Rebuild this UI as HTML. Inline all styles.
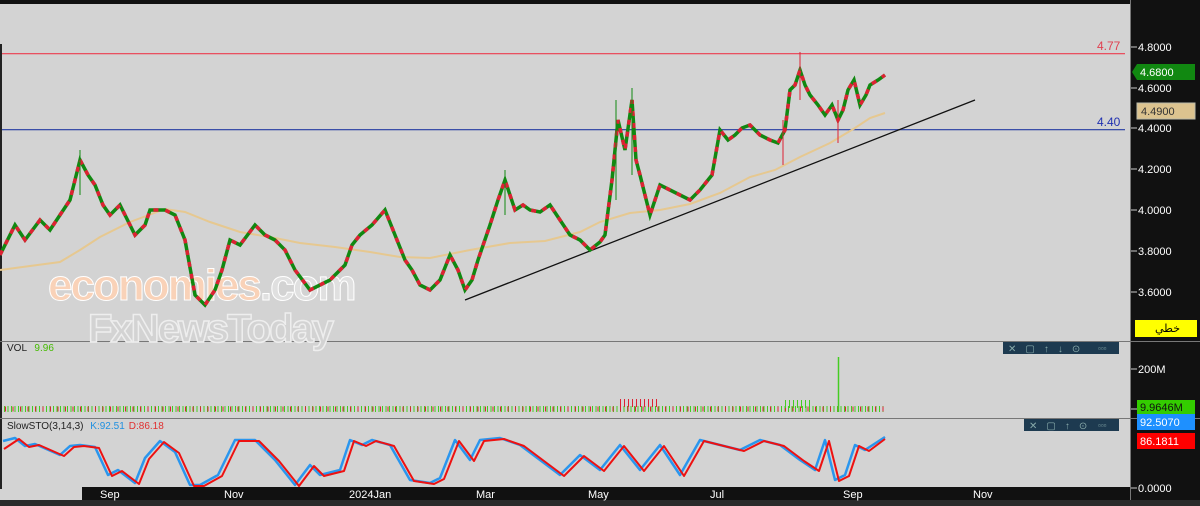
<!DOCTYPE html>
<html><head><meta charset="utf-8"><style>
body{margin:0;width:1200px;height:506px;overflow:hidden;background:#d3d3d3;font-family:"Liberation Sans",sans-serif}
svg{display:block}
</style></head><body>
<svg width="1200" height="506" xmlns="http://www.w3.org/2000/svg" font-family="Liberation Sans, DejaVu Sans, sans-serif">
<rect width="1200" height="506" fill="#d3d3d3"/>
<rect x="0" y="0" width="1130" height="4" fill="#111"/>
<rect x="0" y="44" width="2" height="445" fill="#222"/>
<rect x="1130" y="0" width="70" height="506" fill="#111"/>
<line x1="1130.5" y1="0" x2="1130.5" y2="500" stroke="#777"/>
<line x1="0" y1="341.5" x2="1200" y2="341.5" stroke="#777"/>
<line x1="0" y1="418.5" x2="1200" y2="418.5" stroke="#777"/>
<rect x="2" y="53" width="1123" height="1.3" fill="#e85060"/>
<rect x="2" y="129" width="1123" height="1.3" fill="#3a4ea8"/>
<text x="1097" y="50" font-size="12" fill="#e04050">4.77</text>
<text x="1097" y="126" font-size="12" fill="#2030b0">4.40</text>
<text x="48" y="300" font-size="44" font-weight="bold" fill="#f9d2b8" stroke="#fff" stroke-width="1" letter-spacing="-2">economies<tspan fill="#e0e0e0">.com</tspan></text>
<text x="88" y="342" font-size="40" font-weight="bold" fill="#d3d3d3" stroke="#eee" stroke-width="1.5" letter-spacing="-2">FxNewsToday</text>
<polyline fill="none" stroke="#e6c890" stroke-width="2" points="0,270 30,266 60,262 80,250 100,237 130,222 165,209 185,212 210,222 240,232 275,238 300,243 335,247 370,252 400,257 430,258 470,250 510,243 545,241 580,232 600,222 630,213 660,210 690,204 720,193 750,177 775,170 800,157 830,143 855,128 870,118 885,113"/>
<line x1="465" y1="300" x2="975" y2="100" stroke="#111" stroke-width="1.3"/>
<g fill="none" stroke-width="3.5">
<polyline stroke="#118811" points="0,255 15,225 25,240 40,220 50,230 60,215 70,200 80,160 88,175 95,185 103,205 110,215 120,205 135,235 145,225 150,210 165,210 175,215 185,240 195,295 205,305 215,290 222,270 230,240 240,245 255,225 265,235 275,240 285,250 295,270 310,290 320,285 330,280 345,265 352,245 360,235 372,225 385,210 395,235 405,260 412,270 420,285 430,290 440,280 450,255 458,270 465,290 472,280 478,260 490,225 498,200 505,180 515,210 523,205 530,210 540,212 550,205 560,220 570,235 580,240 590,250 600,242 605,235 612,180 618,120 625,150 632,100 636,160 640,175 650,215 660,185 670,190 680,195 690,200 700,190 712,175 720,130 728,140 735,135 742,128 750,125 760,135 770,140 778,143 785,130 790,90 795,85 800,70 805,85 810,95 818,105 825,115 832,105 838,120 843,110 848,90 854,80 860,105 866,95 870,85 878,80 885,75"/>
<polyline stroke="#dd2233" stroke-dasharray="5 7" points="0,255 15,225 25,240 40,220 50,230 60,215 70,200 80,160 88,175 95,185 103,205 110,215 120,205 135,235 145,225 150,210 165,210 175,215 185,240 195,295 205,305 215,290 222,270 230,240 240,245 255,225 265,235 275,240 285,250 295,270 310,290 320,285 330,280 345,265 352,245 360,235 372,225 385,210 395,235 405,260 412,270 420,285 430,290 440,280 450,255 458,270 465,290 472,280 478,260 490,225 498,200 505,180 515,210 523,205 530,210 540,212 550,205 560,220 570,235 580,240 590,250 600,242 605,235 612,180 618,120 625,150 632,100 636,160 640,175 650,215 660,185 670,190 680,195 690,200 700,190 712,175 720,130 728,140 735,135 742,128 750,125 760,135 770,140 778,143 785,130 790,90 795,85 800,70 805,85 810,95 818,105 825,115 832,105 838,120 843,110 848,90 854,80 860,105 866,95 870,85 878,80 885,75"/>
</g>
<g stroke-width="1">
<line x1="632" y1="88" x2="632" y2="175" stroke="#118811"/>
<line x1="616" y1="100" x2="616" y2="200" stroke="#118811"/>
<line x1="80" y1="150" x2="80" y2="195" stroke="#118811"/>
<line x1="505" y1="170" x2="505" y2="215" stroke="#118811"/>
<line x1="800" y1="52" x2="800" y2="100" stroke="#dd2233"/>
<line x1="838" y1="100" x2="838" y2="143" stroke="#dd2233"/>
<line x1="783" y1="120" x2="783" y2="165" stroke="#dd2233"/>
</g>
<line x1="4" y1="409" x2="885" y2="409" stroke="#44cc22" stroke-width="6" stroke-dasharray="1 2.5"/>
<line x1="5" y1="409" x2="885" y2="409" stroke="#dd2233" stroke-width="5" stroke-dasharray="1 6.5"/>
<line x1="620" y1="403" x2="660" y2="403" stroke="#dd2233" stroke-width="8" stroke-dasharray="1 3"/>
<line x1="785" y1="404" x2="810" y2="404" stroke="#44cc22" stroke-width="8" stroke-dasharray="1 3"/>
<line x1="838.5" y1="357" x2="838.5" y2="412" stroke="#44cc22" stroke-width="1.5"/>
<text x="7" y="351" font-size="10" fill="#222">VOL <tspan dx="5" fill="#44bb00">9.96</tspan></text>
<text x="7" y="429" font-size="10" fill="#222">SlowSTO(3,14,3) <tspan dx="4" fill="#2090e0">K:92.51</tspan><tspan dx="4" fill="#e03030">D:86.18</tspan></text>
<polyline fill="none" stroke="#2a96ee" stroke-width="2.5" stroke-linejoin="round" points="3,441 15,438 25,446 35,444 60,455 70,446 80,445 95,447 108,475 118,470 135,483 145,458 160,441 175,452 190,485 200,485 218,475 235,440 255,440 275,460 295,485 310,465 320,475 340,470 350,440 362,445 372,440 390,445 410,480 430,483 440,478 455,440 470,460 480,440 500,438 520,445 540,460 560,475 580,455 600,470 620,445 640,470 660,445 680,475 700,440 720,445 740,450 760,440 780,445 800,460 815,470 825,440 835,480 845,475 855,445 865,450 885,437"/>
<polyline fill="none" stroke="#ee1111" stroke-width="2" stroke-linejoin="round" transform="translate(4,1)" points="0,448 15,438 25,446 35,444 60,455 70,446 80,445 95,447 108,475 118,470 135,483 145,458 160,441 175,452 190,485 200,485 218,475 235,440 255,440 275,460 295,485 310,465 320,475 340,470 350,440 362,445 372,440 390,445 410,480 430,483 440,478 455,440 470,460 480,440 500,438 520,445 540,460 560,475 580,455 600,470 620,445 640,470 660,445 680,475 700,440 720,445 740,450 760,440 780,445 800,460 815,470 825,440 835,480 845,475 855,445 865,450 881,438"/>
<rect x="1003" y="342" width="116" height="12" fill="#1d3a50"/>
<text x="1008" y="352" font-size="10" fill="#8aa" letter-spacing="9">✕▢↑↓⊙</text>
<text x="1098" y="351" font-size="8" fill="#8aa">▫▫▫</text>
<rect x="1024" y="419" width="95" height="12" fill="#1d3a50"/>
<text x="1029" y="429" font-size="10" fill="#8aa" letter-spacing="9">✕▢↑⊙</text>
<text x="1098" y="428" font-size="8" fill="#8aa">▫▫▫</text>
<rect x="82" y="487" width="1048" height="13" fill="#111"/>
<rect x="0" y="500" width="1200" height="6" fill="#2a2a2a"/>
<g font-size="11" fill="#fff">
<text x="100" y="498">Sep</text><text x="224" y="498">Nov</text><text x="349" y="498">2024Jan</text><text x="476" y="498">Mar</text><text x="588" y="498">May</text><text x="710" y="498">Jul</text><text x="843" y="498">Sep</text><text x="973" y="498">Nov</text>
</g>
<g font-size="11" fill="#fff">
<g stroke="#ccc"><line x1="1131" y1="47" x2="1137" y2="47"/><line x1="1131" y1="88" x2="1137" y2="88"/><line x1="1131" y1="128" x2="1137" y2="128"/><line x1="1131" y1="169" x2="1137" y2="169"/><line x1="1131" y1="210" x2="1137" y2="210"/><line x1="1131" y1="251" x2="1137" y2="251"/><line x1="1131" y1="292" x2="1137" y2="292"/><line x1="1131" y1="369" x2="1137" y2="369"/><line x1="1131" y1="409" x2="1137" y2="409"/><line x1="1131" y1="488" x2="1137" y2="488"/></g>
<text x="1138" y="51">4.8000</text><text x="1138" y="92">4.6000</text><text x="1138" y="132">4.4000</text><text x="1138" y="173">4.2000</text><text x="1138" y="214">4.0000</text><text x="1138" y="255">3.8000</text><text x="1138" y="296">3.6000</text><text x="1138" y="373">200M</text><text x="1138" y="492">0.0000</text>
</g>
<polygon points="1132,72 1137,64 1195,64 1195,80 1137,80" fill="#118811"/>
<text x="1140" y="76" font-size="11" fill="#fff">4.6800</text>
<rect x="1137" y="103" width="58" height="16" fill="#dcc38f" stroke="#bba"/>
<text x="1141" y="115" font-size="11" fill="#333">4.4900</text>
<rect x="1135" y="320" width="62" height="17" fill="#ffff00"/>
<text x="1155" y="332" font-size="11" fill="#000" font-family="DejaVu Sans, sans-serif">خطي</text>
<rect x="1137" y="400" width="58" height="14" fill="#33cc00"/>
<text x="1140" y="411" font-size="11" fill="#111">9.9646M</text>
<rect x="1137" y="414" width="58" height="16" fill="#1e90ff"/>
<text x="1140" y="426" font-size="11" fill="#fff">92.5070</text>
<rect x="1137" y="433" width="58" height="16" fill="#ff0000"/>
<text x="1140" y="445" font-size="11" fill="#fff">86.1811</text>
</svg>
</body></html>
